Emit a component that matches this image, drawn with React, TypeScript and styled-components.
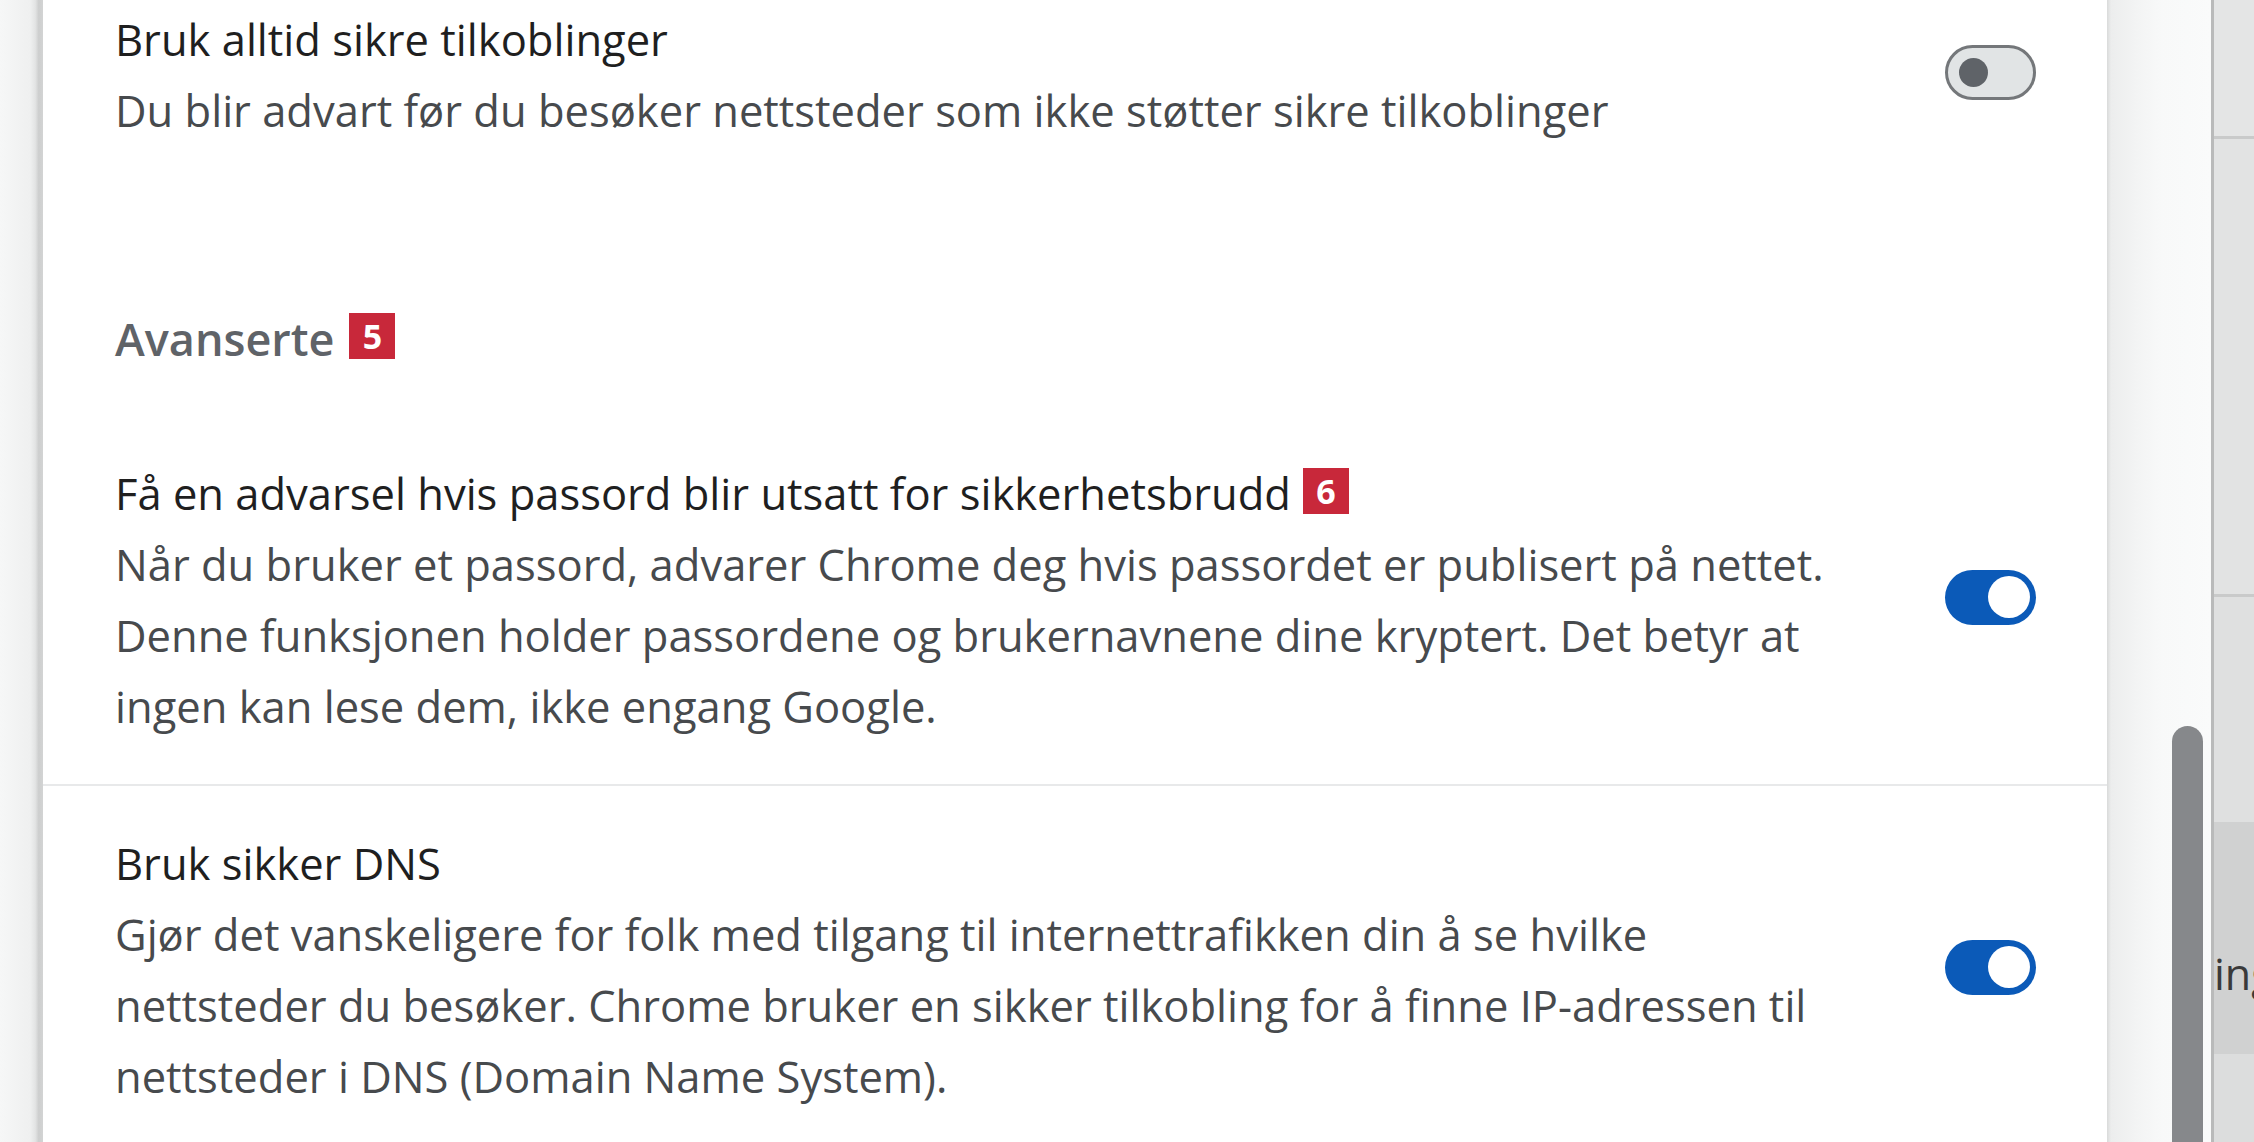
import React from "react";
import styled, { createGlobalStyle } from "styled-components";

const GlobalStyle = createGlobalStyle`
  html, body {
    margin: 0;
    padding: 0;
    background: #ffffff;
    overflow: hidden;
  }
  body {
    font-family: "Open Sans", "Noto Sans", "DejaVu Sans", sans-serif;
  }
`;

const Page = styled.div`
  display: flex;
  width: 2254px;
  height: 1142px;
  overflow: hidden;
`;

const LeftGutter = styled.div`
  flex: 0 0 43px;
  background: linear-gradient(
    to right,
    #f6f7f7 0%,
    #eff0f0 70%,
    #e3e4e4 82%,
    #cdcece 90%,
    #d3d4d4 100%
  );
`;

const Panel = styled.main`
  flex: 0 0 2064px;
  background: #ffffff;
  display: flex;
  flex-direction: column;
  overflow: hidden;
`;

const Row = styled.div<{ $divider?: boolean; $top?: number }>`
  display: flex;
  align-items: center;
  gap: 70px;
  padding: ${(p) => (p.$top ?? 42)}px 71px 42px 72px;
  border-top: ${(p) => (p.$divider ? "2px solid #e8e9ea" : "none")};
`;

const TextCol = styled.div`
  flex: 1;
  min-width: 0;
  font-size: 43.5px;
  line-height: 71px;
`;

const Label = styled.div`
  color: #1f1f1f;
  white-space: nowrap;
  display: flex;
  align-items: center;
  gap: 12px;
`;

const SubLine = styled.div`
  color: #474a4d;
  white-space: nowrap;
`;

const SectionHeader = styled.h2`
  margin: 0;
  padding: 121px 72px 47px;
  font-size: 45px;
  line-height: 60px;
  font-weight: 600;
  color: #5f6368;
  display: flex;
  align-items: center;
  gap: 15px;
`;

const Badge = styled.span`
  display: inline-flex;
  align-items: center;
  justify-content: center;
  width: 46px;
  height: 46px;
  background: #c8283a;
  color: #ffffff;
  font-size: 34px;
  font-weight: 700;
  line-height: 1;
  margin-top: -6px;
`;

const Toggle = styled.div<{ $on: boolean }>`
  flex: 0 0 91px;
  height: 55px;
  box-sizing: border-box;
  border-radius: 28px;
  margin-bottom: 6px;
  display: flex;
  align-items: center;
  justify-content: ${(p) => (p.$on ? "flex-end" : "flex-start")};
  padding: ${(p) => (p.$on ? "0 6px" : "0 11px")};
  background: ${(p) => (p.$on ? "#0b5ab8" : "#e1e4e5")};
  border: ${(p) => (p.$on ? "none" : "3px solid #74777a")};
`;

const Knob = styled.span<{ $on: boolean }>`
  width: ${(p) => (p.$on ? 42 : 29)}px;
  height: ${(p) => (p.$on ? 42 : 29)}px;
  border-radius: 50%;
  background: ${(p) => (p.$on ? "#ffffff" : "#5f6368")};
`;

const ScrollTrack = styled.div`
  flex: 0 0 104px;
  display: flex;
  flex-direction: column;
  background: linear-gradient(
    to right,
    #d9dada 0px,
    #eceded 4px,
    #f3f4f4 30px,
    #f8f9f9 55px,
    #fafbfb 100%
  );
`;

const Thumb = styled.div`
  margin: 726px 0 0 65px;
  width: 31px;
  flex: 1;
  background: #86888b;
  border-radius: 16px 16px 0 0;
`;

const SidePeek = styled.aside`
  flex: 1;
  display: flex;
  flex-direction: column;
  border-left: 3px solid #b9baba;
  overflow: hidden;
`;

const PeekBlock = styled.div<{ $h: number; $bg: string; $line?: boolean }>`
  flex: 0 0 ${(p) => p.$h}px;
  background: ${(p) => p.$bg};
  border-bottom: ${(p) => (p.$line ? "3px solid #c9caca" : "none")};
  display: flex;
  align-items: center;
  overflow: hidden;
`;

const PeekText = styled.span`
  font-size: 43px;
  color: #3a3a3a;
  white-space: nowrap;
  margin-top: 70px;
`;

type Setting = {
  label: string;
  badge?: string;
  lines: string[];
  on: boolean;
};

const SettingRow: React.FC<{ s: Setting; divider?: boolean; top?: number }> = ({
  s,
  divider,
  top,
}) => (
  <Row $divider={divider} $top={top}>
    <TextCol>
      <Label>
        {s.label}
        {s.badge && <Badge>{s.badge}</Badge>}
      </Label>
      {s.lines.map((l) => (
        <SubLine key={l}>{l}</SubLine>
      ))}
    </TextCol>
    <Toggle $on={s.on} role="switch" aria-checked={s.on}>
      <Knob $on={s.on} />
    </Toggle>
  </Row>
);

const secure: Setting = {
  label: "Bruk alltid sikre tilkoblinger",
  lines: ["Du blir advart før du besøker nettsteder som ikke støtter sikre tilkoblinger"],
  on: false,
};

const leak: Setting = {
  label: "Få en advarsel hvis passord blir utsatt for sikkerhetsbrudd",
  badge: "6",
  lines: [
    "Når du bruker et passord, advarer Chrome deg hvis passordet er publisert på nettet.",
    "Denne funksjonen holder passordene og brukernavnene dine kryptert. Det betyr at",
    "ingen kan lese dem, ikke engang Google.",
  ],
  on: true,
};

const dns: Setting = {
  label: "Bruk sikker DNS",
  lines: [
    "Gjør det vanskeligere for folk med tilgang til internettrafikken din å se hvilke",
    "nettsteder du besøker. Chrome bruker en sikker tilkobling for å finne IP-adressen til",
    "nettsteder i DNS (Domain Name System).",
  ],
  on: true,
};

export default function App() {
  return (
    <>
      <GlobalStyle />
      <Page>
        <LeftGutter />
        <Panel>
          <SettingRow s={secure} top={4} />
          <SectionHeader>
            Avanserte <Badge>5</Badge>
          </SectionHeader>
          <SettingRow s={leak} />
          <SettingRow s={dns} divider />
        </Panel>
        <ScrollTrack>
          <Thumb />
        </ScrollTrack>
        <SidePeek>
          <PeekBlock $h={136} $bg="#e4e5e5" $line />
          <PeekBlock $h={455} $bg="#e2e3e3" $line />
          <PeekBlock $h={225} $bg="#dfe0e0" />
          <PeekBlock $h={232} $bg="#d0d1d1">
            <PeekText>ing</PeekText>
          </PeekBlock>
          <PeekBlock $h={100} $bg="#dcdddd" />
        </SidePeek>
      </Page>
    </>
  );
}
